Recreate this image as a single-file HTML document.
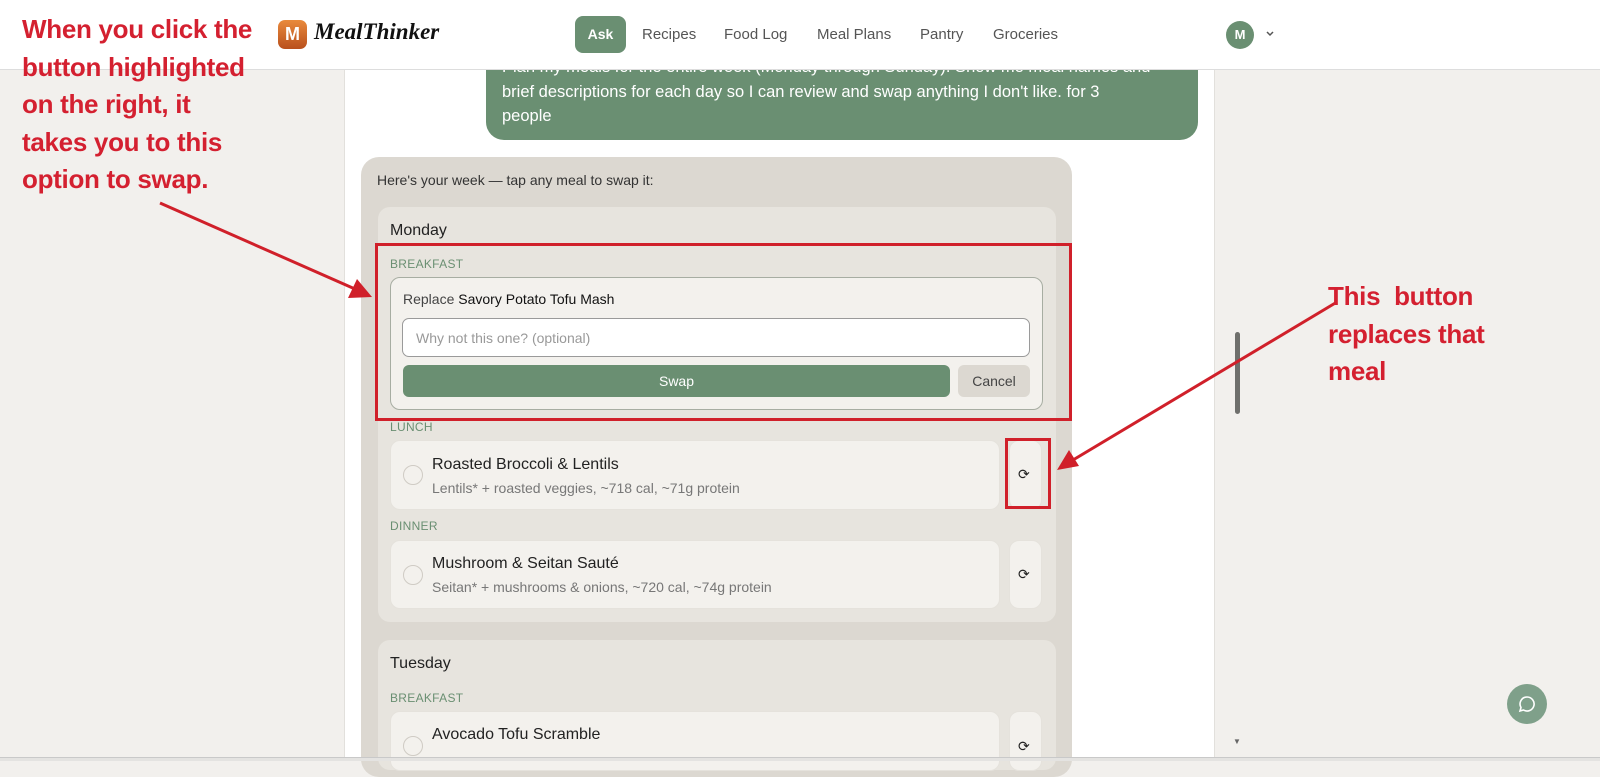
<!DOCTYPE html>
<html><head><meta charset="utf-8"><style>
*{box-sizing:border-box;margin:0;padding:0}
body{width:1600px;height:761px;overflow:hidden;background:#f2f0ed;font-family:"Liberation Sans",sans-serif;position:relative;color:#222}
.abs{position:absolute}
.hdr{left:0;top:0;width:1600px;height:70px;background:#fff;border-bottom:1px solid #ddd;z-index:5}
.center{left:344px;top:70px;width:871px;height:691px;background:#fff;border-left:1px solid #e2e0dc;border-right:1px solid #e2e0dc}
.nav{font-size:15px;color:#555;top:26px}
.ub{left:486px;top:30px;width:712px;height:110px;background:#6a8f72;border-radius:18px;color:#fff;font-size:16.5px;line-height:24.5px;padding:25px 10px 0 16px;white-space:nowrap}
.ab{left:361px;top:157px;width:711px;height:620px;background:#dcd8d1;border-radius:18px}
.day{background:#e7e4de;border-radius:12px;left:378px;width:678px}
.lbl{font-size:12px;color:#6a8f72;letter-spacing:.3px}
.card{background:#f3f1ed;border-radius:10px;border:1px solid #e5e2dc}
.sw{background:#f3f1ed;border-radius:10px;border:1px solid #e5e2dc;width:33px}
.rad{width:20px;height:20px;border-radius:50%;border:1.5px solid #cfcbc4}
.t1{font-size:16px;color:#222}
.t2{font-size:14px;color:#777}
.red{color:#d42030;font-family:"Liberation Sans",sans-serif;font-weight:bold;font-size:26px;line-height:37.5px;letter-spacing:-.3px}
</style></head><body>
<div class="abs center"></div>
<div class="abs ub">Plan my meals for the entire week (Monday through Sunday). Show me meal names and<br>brief descriptions for each day so I can review and swap anything I don't like. for 3<br>people</div>
<div class="abs hdr">
  <div class="abs" style="left:278px;top:20px;width:29px;height:29px;border-radius:7px;background:linear-gradient(#e98a3c,#b9501d);color:#fff;font-weight:bold;font-size:18px;text-align:center;line-height:29px">M</div>
  <div class="abs" style="left:314px;top:19px;font-family:'Liberation Serif',serif;font-style:italic;font-weight:bold;font-size:23px;color:#111">MealThinker</div>
  <div class="abs" style="left:575px;top:16px;width:51px;height:37px;background:#6a8f72;border-radius:8px;color:#fff;font-weight:bold;font-size:14px;text-align:center;line-height:37px">Ask</div>
  <div class="abs nav" style="left:642px">Recipes</div>
  <div class="abs nav" style="left:724px">Food Log</div>
  <div class="abs nav" style="left:817px">Meal Plans</div>
  <div class="abs nav" style="left:920px">Pantry</div>
  <div class="abs nav" style="left:993px">Groceries</div>
  <div class="abs" style="left:1226px;top:21px;width:28px;height:28px;border-radius:50%;background:#6a8f72;color:#fff;font-weight:bold;font-size:13px;text-align:center;line-height:28px">M</div>
  <svg class="abs" style="left:1265px;top:30px" width="10" height="8"><path d="M2 2l3 3 3-3" stroke="#555" stroke-width="1.5" fill="none"/></svg>
</div>
<div class="abs ab"></div>
<div class="abs" style="left:377px;top:172px;font-size:14px;color:#333">Here's your week — tap any meal to swap it:</div>
<div class="abs day" style="top:207px;height:415px"></div>
<div class="abs t1" style="left:390px;top:222px;font-weight:500">Monday</div>
<div class="abs lbl" style="left:390px;top:257px">BREAKFAST</div>
<div class="abs" style="left:390px;top:277px;width:653px;height:133px;background:#f3f1ed;border:1px solid #a7ada2;border-radius:10px"></div>
<div class="abs" style="left:403px;top:291px;font-size:14px;color:#444">Replace <span style="color:#111">Savory Potato Tofu Mash</span></div>
<div class="abs" style="left:402px;top:318px;width:628px;height:39px;background:#fff;border:1px solid #9a9a9a;border-radius:7px;font-size:14px;color:#999;padding:11px 13px">Why not this one? (optional)</div>
<div class="abs" style="left:403px;top:365px;width:547px;height:32px;background:#6a8f72;border-radius:6px;color:#fff;font-size:14px;text-align:center;line-height:32px">Swap</div>
<div class="abs" style="left:958px;top:365px;width:72px;height:32px;background:#dcd8d1;border-radius:6px;color:#444;font-size:14px;text-align:center;line-height:32px">Cancel</div>

<div class="abs lbl" style="left:390px;top:420px">LUNCH</div>
<div class="abs card" style="left:390px;top:440px;width:610px;height:70px"></div>
<div class="abs rad" style="left:403px;top:465px"></div>
<div class="abs t1" style="left:432px;top:456px">Roasted Broccoli &amp; Lentils</div>
<div class="abs t2" style="left:432px;top:480px">Lentils* + roasted veggies, ~718 cal, ~71g protein</div>
<div class="abs sw" style="left:1009px;top:440px;height:70px"></div>
<div class="abs" style="left:1018px;top:466px;font-size:14px;color:#222">⟳</div>

<div class="abs lbl" style="left:390px;top:519px">DINNER</div>
<div class="abs card" style="left:390px;top:540px;width:610px;height:69px"></div>
<div class="abs rad" style="left:403px;top:565px"></div>
<div class="abs t1" style="left:432px;top:555px">Mushroom &amp; Seitan Sauté</div>
<div class="abs t2" style="left:432px;top:579px">Seitan* + mushrooms &amp; onions, ~720 cal, ~74g protein</div>
<div class="abs sw" style="left:1009px;top:540px;height:69px"></div>
<div class="abs" style="left:1018px;top:566px;font-size:14px;color:#222">⟳</div>

<div class="abs day" style="top:640px;height:130px"></div>
<div class="abs t1" style="left:390px;top:655px;font-weight:500">Tuesday</div>
<div class="abs lbl" style="left:390px;top:691px">BREAKFAST</div>
<div class="abs card" style="left:390px;top:711px;width:610px;height:60px"></div>
<div class="abs rad" style="left:403px;top:736px"></div>
<div class="abs t1" style="left:432px;top:726px">Avocado Tofu Scramble</div>
<div class="abs sw" style="left:1009px;top:711px;height:60px"></div>
<div class="abs" style="left:1018px;top:738px;font-size:14px;color:#222">⟳</div>

<div class="abs" style="left:0;top:757px;width:1600px;height:4px;background:#e4e3e1;border-top:1px solid #c9c9c9"></div>
<div class="abs" style="left:1233px;top:737px;font-size:8px;color:#666">▼</div>
<div class="abs" style="left:1235px;top:332px;width:5px;height:82px;background:#6f6f6c;border-radius:3px"></div>
<div class="abs" style="left:1507px;top:684px;width:40px;height:40px;border-radius:50%;background:#7fa08a"></div>
<svg class="abs" style="left:1518px;top:695px" width="18" height="18"><path d="M9 2a7 7 0 1 1-3.5 13L2 16l1-3.5A7 7 0 0 1 9 2z" stroke="#fff" stroke-width="1.6" fill="none"/></svg>

<div class="abs" style="left:375px;top:243px;width:697px;height:178px;border:3px solid #d0202a"></div>
<div class="abs" style="left:1005px;top:438px;width:46px;height:71px;border:3px solid #d0202a"></div>
<svg class="abs" style="left:0;top:0" width="1600" height="761">
<line x1="160" y1="203" x2="355" y2="289" stroke="#d0202a" stroke-width="3"/>
<polygon points="372,297 348,298 357,279" fill="#d0202a"/>
<line x1="1337" y1="302" x2="1073" y2="460" stroke="#d0202a" stroke-width="3"/>
<polygon points="1057,470 1069,450 1079,466" fill="#d0202a"/>
</svg>
<div class="abs red" style="left:22px;top:11px;z-index:6">When you click the<br>button highlighted<br>on the right, it<br>takes you to this<br>option to swap.</div>
<div class="abs red" style="left:1328px;top:278px;white-space:pre">This  button
replaces that
meal</div>
</body></html>
